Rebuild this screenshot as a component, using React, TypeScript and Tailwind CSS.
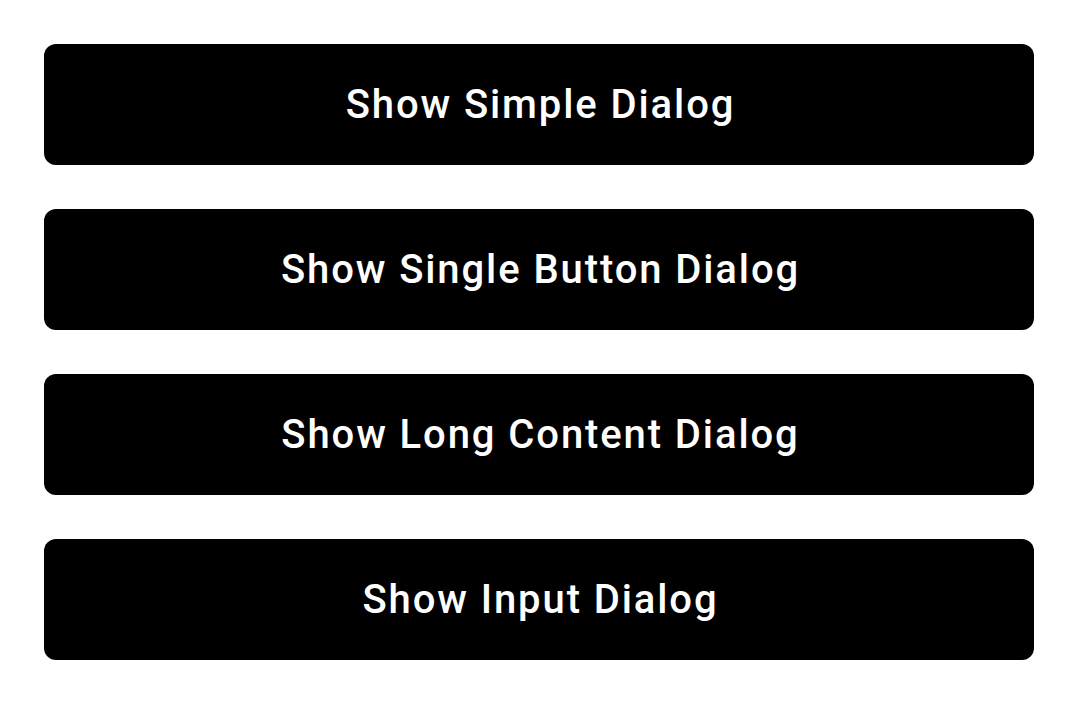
import React from "react";

const labels = [
  "Show Simple Dialog",
  "Show Single Button Dialog",
  "Show Long Content Dialog",
  "Show Input Dialog",
];

export default function App() {
  return (
    <div className="w-[1078px] h-[704px] bg-white flex flex-col gap-[44px] px-[44px] pt-[44px]">
      {labels.map((l) => (
        <button
          key={l}
          className="h-[121px] w-full bg-black rounded-[12px] text-white text-[40px] leading-none font-medium tracking-[1.9px] pl-[3px] flex items-center justify-center"
          style={{ fontFamily: "Roboto, sans-serif" }}
        >
          {l}
        </button>
      ))}
    </div>
  );
}
